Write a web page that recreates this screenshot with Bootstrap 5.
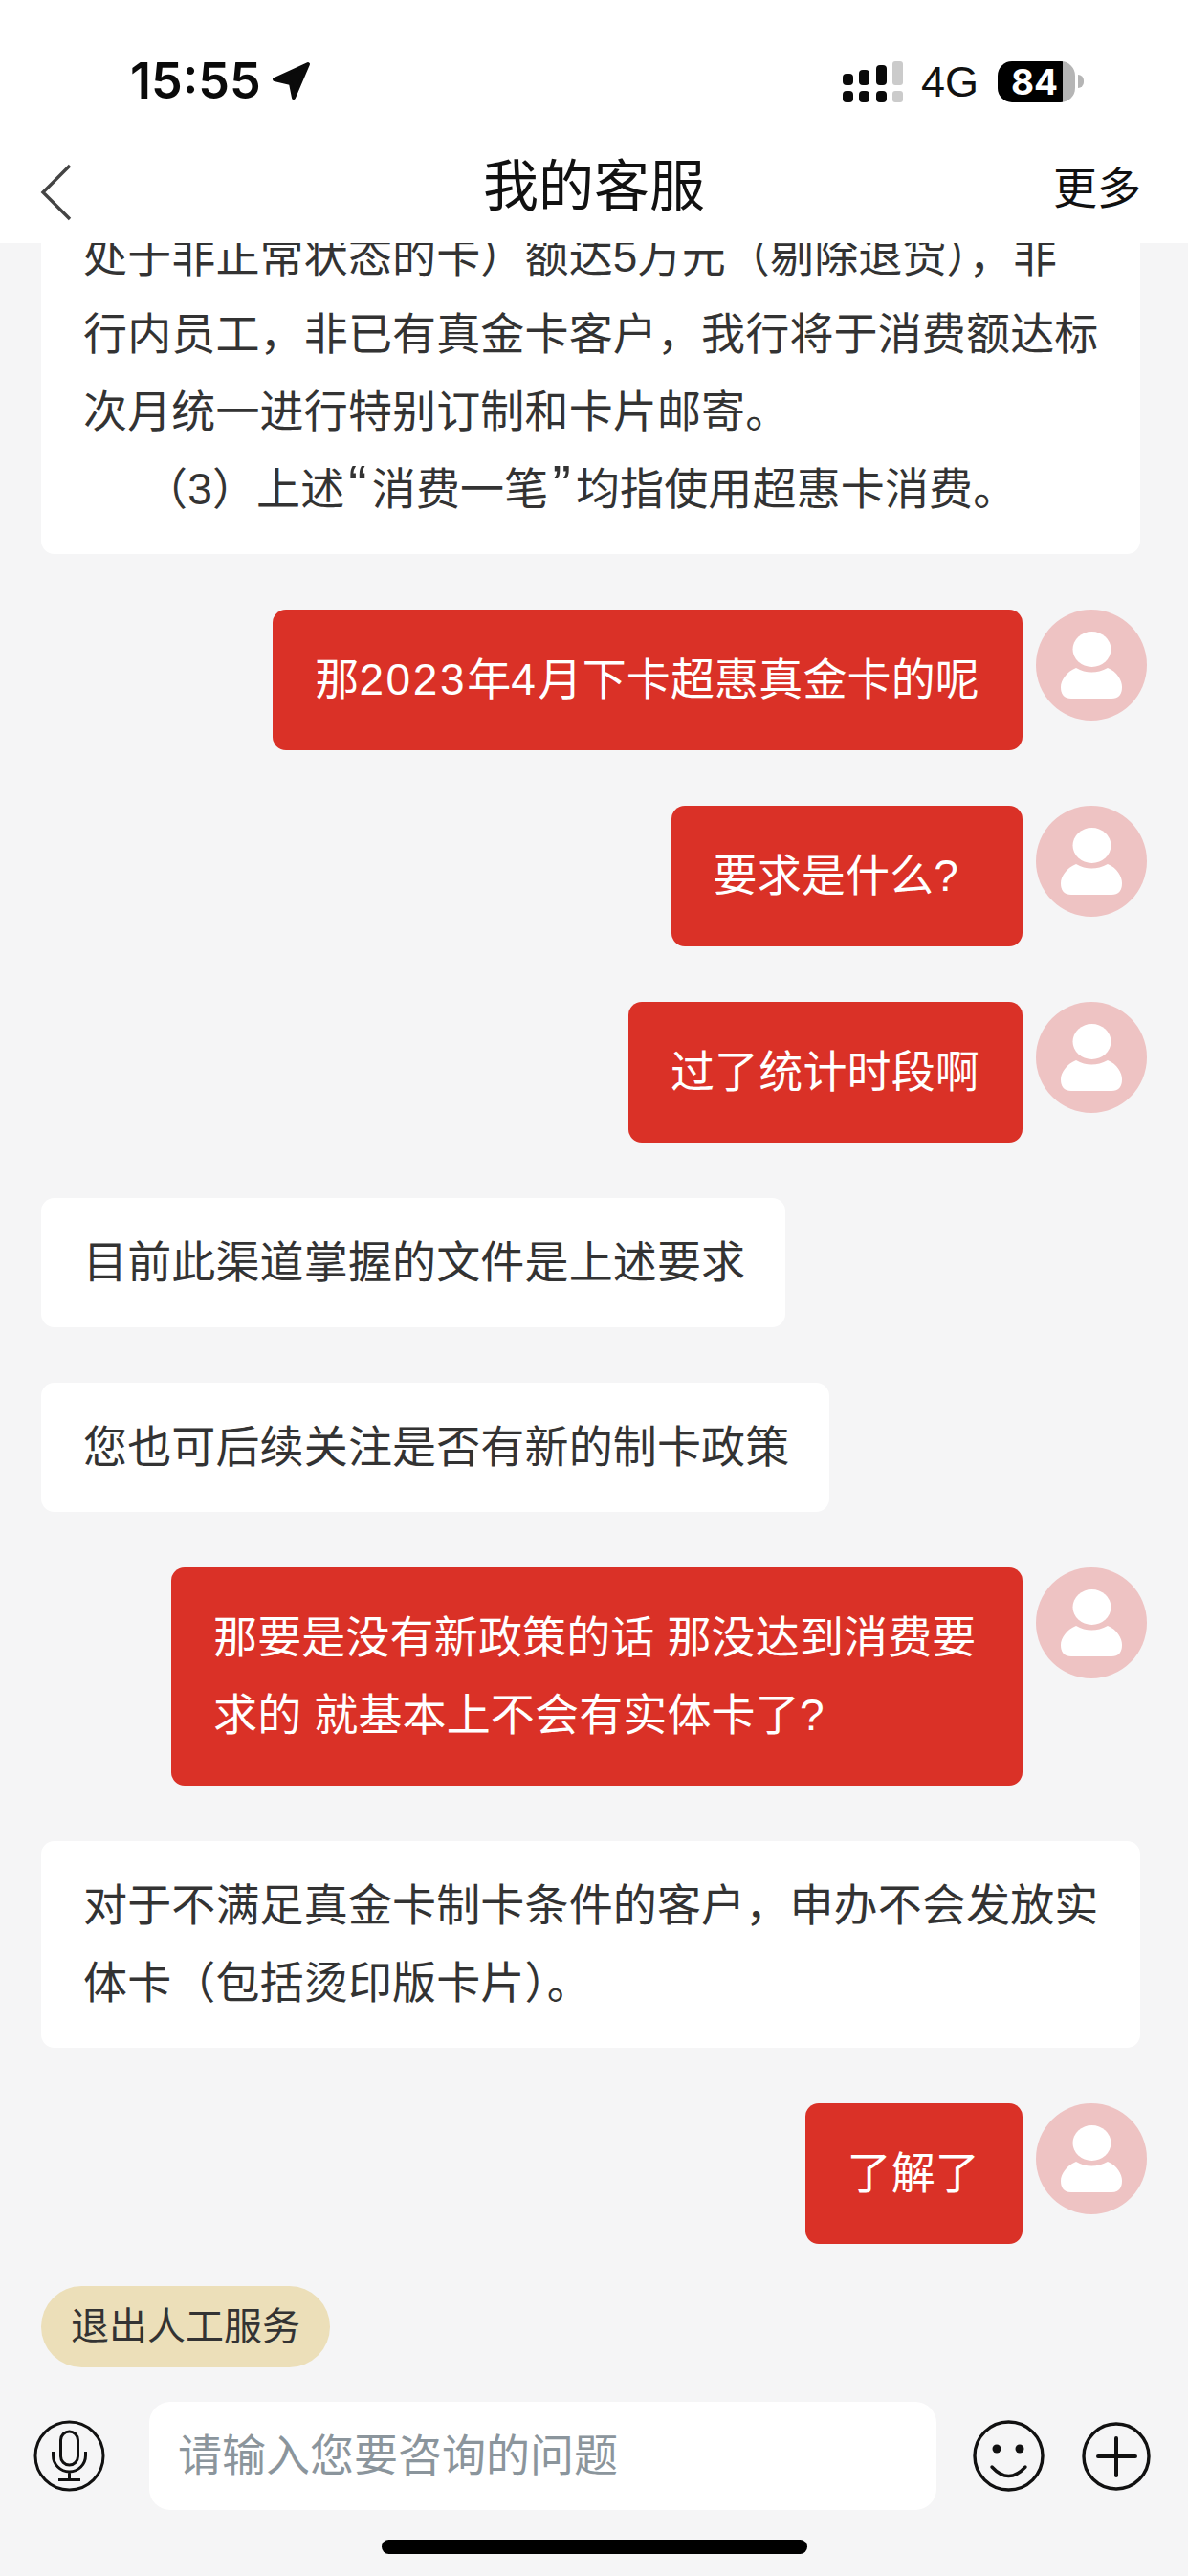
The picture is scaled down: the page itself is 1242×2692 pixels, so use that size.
<!DOCTYPE html>
<html lang="zh-CN">
<head>
<meta charset="utf-8">
<title>我的客服</title>
<link href="https://cdn.jsdelivr.net/npm/bootstrap@5.3.0/dist/css/bootstrap.min.css" rel="stylesheet">
<style>
html, body { margin: 0; background: #f5f5f6; }
body { font-family: "Liberation Sans", "Noto Sans CJK SC", sans-serif; color: #333; }
.phone { width: 1242px; height: 2692px; background: #f5f5f6; padding-bottom: 23px; }
.top-head { height: 254px; }
.status-row { height: 100px; margin-top: 35px; padding-left: 136px; padding-right: 109px; }
.clock { font-family: Inter, "Liberation Sans", sans-serif; font-weight: 600; font-size: 52px; line-height: 1; color: #0a0a0a; letter-spacing: 0; }
.loc-arrow { width: 42px; height: 42px; margin-left: 11px; }
.signal-ic { width: 64px; height: 44px; }
.net-text { font-family: "Liberation Sans", sans-serif; font-size: 45px; line-height: 1; margin-left: 18px; margin-right: 20px; color: #111; }
.batt { width: 81px; height: 43px; border-radius: 15px; background: linear-gradient(to right, #000 68px, #b5b5b5 68px); color: #fff; font-family: Inter, "Liberation Sans", sans-serif; font-weight: 700; font-size: 37px; line-height: 43px; padding-left: 14px; }
.batt-nib { width: 6px; height: 14px; margin-left: 3px; background: #b5b5b5; border-radius: 0 6px 6px 0; }
.nav-row { height: 119px; padding: 5px 49px 0 42px; }
.back-ic { width: 33px; height: 60px; margin-top: 7px; }
.page-title { font-size: 58px; line-height: 1; color: #111; margin: 0; font-weight: 400; white-space: nowrap; }
.more-link { font-size: 46px; line-height: 1; color: #111; }
.chat-zone { min-height: 0; gap: 58px; padding: 0 43px 44px; }
.msg-row { gap: 14px; }
.bub { font-size: 46px; line-height: 81px; letter-spacing: .15px; border-radius: 14px; flex: none; }
.bub-in { background: #fff; color: #333; padding: 27px 42px 27px 44px; align-self: flex-start; max-width: 1149px; }
.bub-out { background: #da3127; color: #fff; padding: 33px 45px 33px 44px; max-width: 890px; }
.bub-tail { padding-right: 67px; }
.para-ind { text-indent: 63px; }
.digs { letter-spacing: 2.6px; }
.quo { font-size: 58px; line-height: 0; margin-left: 4px; margin-right: 5px; }
.avatar-ic { width: 116px; height: 116px; flex: none; }
.quit-pill { background: #ecdfb9; color: #333; font-size: 40px; line-height: 85px; height: 85px; padding: 0 31px; margin-left: 43px; }
.input-row { margin-top: 36px; height: 113px; padding-left: 35px; }
.mic-ic { width: 75px; height: 75px; flex: none; }
.ask-box { width: 823px; height: 113px; margin-left: 46px; border-radius: 22px; padding-left: 30px; font-size: 46px; color: #8b959c; flex: none; }
.smile-ic { width: 75px; height: 75px; margin-left: 38px; flex: none; }
.plus-ic { width: 72px; height: 72px; margin-left: 39px; flex: none; }
.home-bar { width: 445px; height: 15px; background: #000; margin: 31px auto 0; border-radius: 8px; }
</style>
</head>
<body>
<div class="phone d-flex flex-column overflow-hidden">
  <header class="top-head bg-white flex-shrink-0 position-relative">
    <div class="status-row d-flex align-items-center">
      <span class="clock">15:55</span>
      <svg class="loc-arrow" viewBox="0 0 42 42"><path d="M38 3 L3 19 L20 23 L23 38 Z" fill="#0a0a0a" stroke="#0a0a0a" stroke-width="4" stroke-linejoin="round"/></svg>
      <span class="flex-grow-1"></span>
      <svg class="signal-ic" viewBox="0 0 64 44">
        <g fill="#0a0a0a">
          <rect x="0" y="14" width="11" height="12" rx="4"/><rect x="17" y="10" width="11" height="16" rx="4"/><rect x="35" y="5" width="11" height="21" rx="4"/>
          <rect x="0" y="32" width="11" height="12" rx="4"/><rect x="17" y="32" width="11" height="12" rx="4"/><rect x="35" y="32" width="11" height="12" rx="4"/>
        </g>
        <g fill="#cbcbcb"><rect x="52" y="1" width="11" height="25" rx="3"/><rect x="52" y="32" width="11" height="12" rx="3"/></g>
      </svg>
      <span class="net-text">4G</span>
      <div class="batt flex-shrink-0">84</div>
      <span class="batt-nib flex-shrink-0"></span>
    </div>
    <div class="nav-row d-flex align-items-center justify-content-between position-relative">
      <svg class="back-ic" viewBox="0 0 33 60"><path d="M31 2 L3 30 L31 58" fill="none" stroke="#444" stroke-width="3.4"/></svg>
      <h1 class="page-title position-absolute top-50 start-50 translate-middle">我的客服</h1>
      <span class="more-link">更多</span>
    </div>
  </header>

  <main class="chat-zone flex-grow-1 d-flex flex-column justify-content-end overflow-hidden">
    <div class="bub bub-in">
      <div>处于非正常状态的卡）额达5万元（剔除退货），非行内员工，非已有真金卡客户，我行将于消费额达标次月统一进行特别订制和卡片邮寄。</div>
      <div class="para-ind">（3）上述<span class="quo">“</span>消费一笔<span class="quo">”</span>均指使用超惠卡消费。</div>
    </div>

    <div class="msg-row d-flex justify-content-end align-items-start">
      <div class="bub bub-out">那<span class="digs">2023</span>年<span class="digs">4</span>月下卡超惠真金卡的呢</div>
      <svg class="avatar-ic" viewBox="0 0 116 116"><circle cx="58" cy="58" r="58" fill="#eec3c3"/><ellipse cx="58.5" cy="41.5" rx="20" ry="18.5" fill="#fff"/><path d="M42 61 Q58 70 75 61 C85 65 90 74 90 81 Q90 93 79 93 H37 Q26 93 26 81 C26 74 32 65 42 61Z" fill="#fff"/></svg>
    </div>
    <div class="msg-row d-flex justify-content-end align-items-start">
      <div class="bub bub-out bub-tail">要求是什么?</div>
      <svg class="avatar-ic" viewBox="0 0 116 116"><circle cx="58" cy="58" r="58" fill="#eec3c3"/><ellipse cx="58.5" cy="41.5" rx="20" ry="18.5" fill="#fff"/><path d="M42 61 Q58 70 75 61 C85 65 90 74 90 81 Q90 93 79 93 H37 Q26 93 26 81 C26 74 32 65 42 61Z" fill="#fff"/></svg>
    </div>
    <div class="msg-row d-flex justify-content-end align-items-start">
      <div class="bub bub-out">过了统计时段啊</div>
      <svg class="avatar-ic" viewBox="0 0 116 116"><circle cx="58" cy="58" r="58" fill="#eec3c3"/><ellipse cx="58.5" cy="41.5" rx="20" ry="18.5" fill="#fff"/><path d="M42 61 Q58 70 75 61 C85 65 90 74 90 81 Q90 93 79 93 H37 Q26 93 26 81 C26 74 32 65 42 61Z" fill="#fff"/></svg>
    </div>

    <div class="bub bub-in">目前此渠道掌握的文件是上述要求</div>
    <div class="bub bub-in">您也可后续关注是否有新的制卡政策</div>

    <div class="msg-row d-flex justify-content-end align-items-start">
      <div class="bub bub-out">那要是没有新政策的话 那没达到消费要求的 就基本上不会有实体卡了?</div>
      <svg class="avatar-ic" viewBox="0 0 116 116"><circle cx="58" cy="58" r="58" fill="#eec3c3"/><ellipse cx="58.5" cy="41.5" rx="20" ry="18.5" fill="#fff"/><path d="M42 61 Q58 70 75 61 C85 65 90 74 90 81 Q90 93 79 93 H37 Q26 93 26 81 C26 74 32 65 42 61Z" fill="#fff"/></svg>
    </div>

    <div class="bub bub-in">对于不满足真金卡制卡条件的客户，申办不会发放实体卡（包括烫印版卡片）。</div>

    <div class="msg-row d-flex justify-content-end align-items-start">
      <div class="bub bub-out">了解了</div>
      <svg class="avatar-ic" viewBox="0 0 116 116"><circle cx="58" cy="58" r="58" fill="#eec3c3"/><ellipse cx="58.5" cy="41.5" rx="20" ry="18.5" fill="#fff"/><path d="M42 61 Q58 70 75 61 C85 65 90 74 90 81 Q90 93 79 93 H37 Q26 93 26 81 C26 74 32 65 42 61Z" fill="#fff"/></svg>
    </div>
  </main>

  <div class="d-flex flex-shrink-0"><span class="quit-pill rounded-pill">退出人工服务</span></div>

  <div class="input-row d-flex align-items-center flex-shrink-0">
    <svg class="mic-ic" viewBox="0 0 75 75" fill="none" stroke="#111" stroke-width="3">
      <circle cx="37.5" cy="37.5" r="35.5"/>
      <rect x="28.5" y="12" width="18" height="35" rx="9"/>
      <path d="M20.5 33 v4 a17 17 0 0 0 34 0 v-4 M37.5 54 V62 M26 62.5 H49"/>
    </svg>
    <div class="ask-box bg-white d-flex align-items-center">请输入您要咨询的问题</div>
    <svg class="smile-ic" viewBox="0 0 75 75" fill="none" stroke="#111" stroke-width="3.4">
      <circle cx="37.5" cy="37.5" r="35.5"/>
      <circle cx="25" cy="30" r="4.5" fill="#111" stroke="none"/><circle cx="49" cy="30" r="4.5" fill="#111" stroke="none"/>
      <path d="M20 49 Q37.5 68 55 49" stroke-linecap="round"/>
    </svg>
    <svg class="plus-ic" viewBox="0 0 72 72" fill="none" stroke="#111" stroke-width="3.4">
      <circle cx="36" cy="36" r="34"/>
      <path d="M17 36 H56 M36 17 V56" stroke-width="4" stroke-linecap="round"/>
    </svg>
  </div>

  <div class="home-bar flex-shrink-0"></div>
</div>
<script src="https://cdn.jsdelivr.net/npm/bootstrap@5.3.0/dist/js/bootstrap.bundle.min.js"></script>
</body>
</html>
